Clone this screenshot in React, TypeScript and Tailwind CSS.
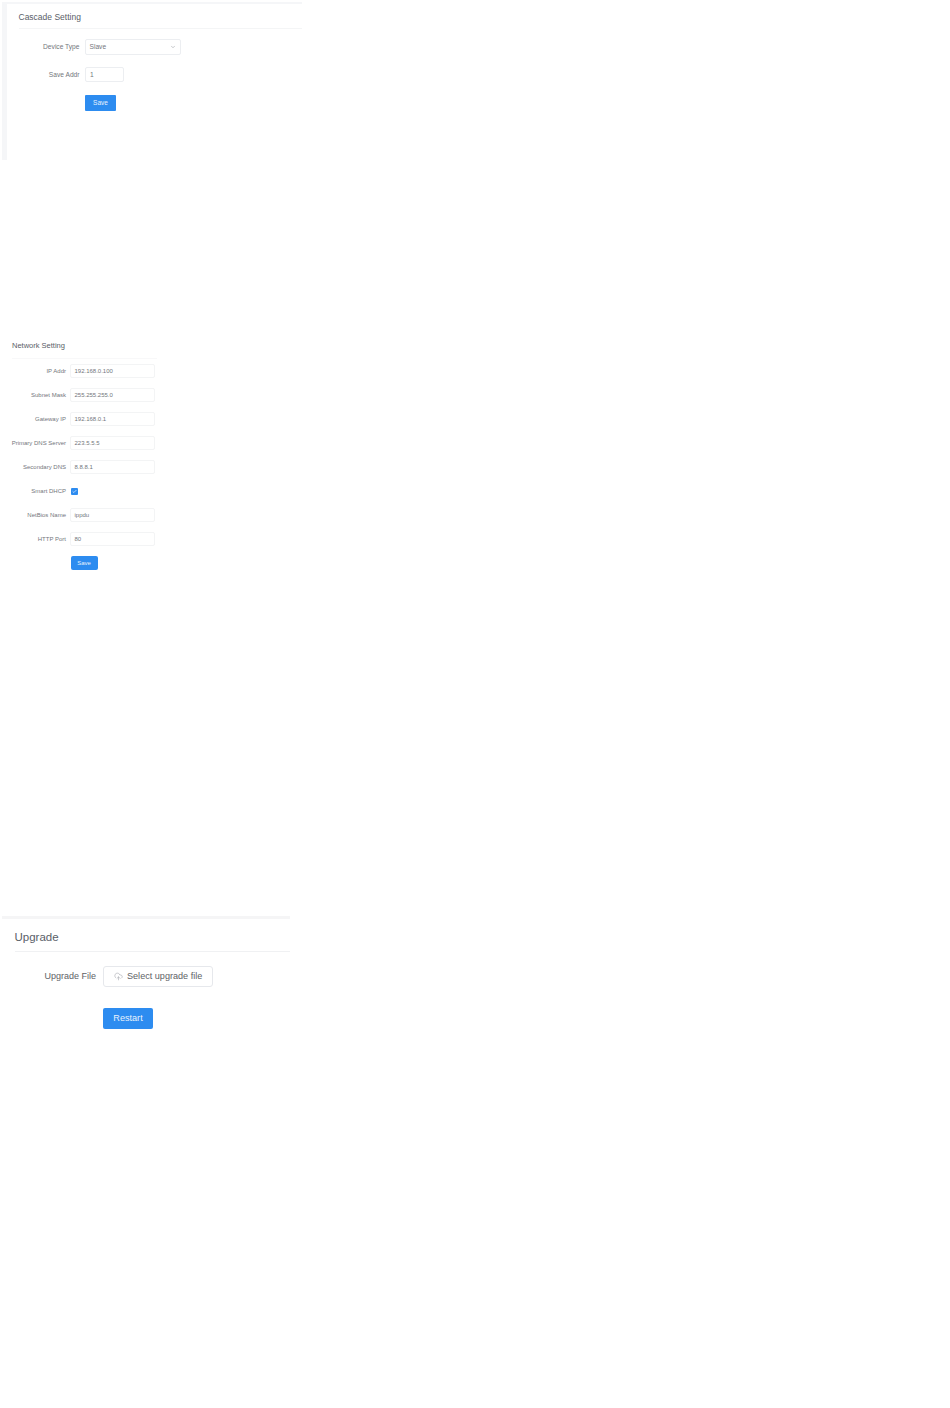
import { ChevronDown, UploadCloud, Check } from "lucide-react";

const netRows = [
  { label: "IP Addr", value: "192.168.0.100" },
  { label: "Subnet Mask", value: "255.255.255.0" },
  { label: "Gateway IP", value: "192.168.0.1" },
  { label: "Primary DNS Server", value: "223.5.5.5" },
  { label: "Secondary DNS", value: "8.8.8.1" },
  { label: "Smart DHCP", value: null },
  { label: "NetBios Name", value: "ippdu" },
  { label: "HTTP Port", value: "80" },
];

function NetRow({ label, value }: { label: string; value: string | null }) {
  return (
    <div className="flex items-center h-[14px] mb-[10px]">
      <div className="w-[66px] text-right text-[6px] text-[#73767c] whitespace-nowrap">{label}</div>
      <div className="ml-[4px]">
        {value === null ? (
          <div className="ml-[0.5px] w-[7px] h-[7px] rounded-[1px] bg-[#2d8cf0] flex items-center justify-center">
            <Check size={5} strokeWidth={3} className="text-white" />
          </div>
        ) : (
          <div className="w-[85px] h-[14px] border border-[#f3f4f5] rounded-[2px] pl-[3.5px] flex items-center text-[6px] text-[#73767c]">
            {value}
          </div>
        )}
      </div>
    </div>
  );
}

export default function App() {
  return (
    <div className="h-[1408px] bg-white font-['Liberation_Sans',Arial,sans-serif] overflow-hidden">
      {/* Cascade */}
      <div className="ml-[2px] mt-[2px] w-[300px] h-[158px] bg-[#f5f6f8] pl-[5px] pt-[2px]">
        <div className="h-full bg-white pl-[11.5px]">
          <div className="h-[25px] border-b border-[#f4f5f6] pt-[7px] text-[8.5px] leading-[12px] text-[#5a6068]">
            Cascade Setting
          </div>
          <div className="flex items-center mt-[10px] h-[16px]">
            <div className="w-[61px] text-right text-[6.65px] text-[#73767c]">Device Type</div>
            <div className="ml-[5.5px] w-[96px] h-[16px] border border-[#eceef1] rounded-[2px] flex items-center justify-between pl-[3.5px] pr-[4px] text-[6.65px] text-[#73767c]">
              Slave
              <ChevronDown size={6} className="text-[#909399]" />
            </div>
          </div>
          <div className="flex items-center mt-[12px] h-[15px]">
            <div className="w-[61px] text-right text-[6.65px] text-[#73767c]">Save Addr</div>
            <div className="ml-[5.5px] w-[39px] h-[15px] border border-[#eceef1] rounded-[2px] pl-[4px] flex items-center text-[6.65px] text-[#73767c]">
              1
            </div>
          </div>
          <div className="ml-[66.5px] mt-[12.5px] w-[31px] h-[16px] bg-[#2d8cf0] rounded-[1px] flex items-center justify-center text-[6.5px] font-light text-[#e8f2fd]">
            Save
          </div>
        </div>
      </div>

      {/* Network */}
      <div className="ml-[12px] mt-[180px] w-[145px]">
        <div className="h-[19px] border-b border-[#f8f8f9] text-[7.5px] leading-[12px] text-[#5a6068]">
          Network Setting
        </div>
      </div>
      <div className="mt-[5px]">
        {netRows.map((r) => (
          <NetRow key={r.label} label={r.label} value={r.value} />
        ))}
        <div className="ml-[70.5px] w-[27px] h-[14px] bg-[#2d8cf0] rounded-[2px] flex items-center justify-center text-[6px] text-[#e8f2fd]">
          Save
        </div>
      </div>

      {/* Upgrade */}
      <div className="ml-[2px] mt-[346px] w-[288px] border-t-[3px] border-[#f5f5f6] pl-[12.5px]">
        <div className="h-[33px] border-b border-[#f0f1f3] pt-[10px] text-[11.5px] leading-[16px] text-[#5a6068]">
          Upgrade
        </div>
        <div className="flex items-center mt-[14px] h-[21px]">
          <div className="w-[81.5px] text-right text-[9px] text-[#606266]">Upgrade File</div>
          <div className="ml-[7px] w-[110px] h-[21px] border border-[#e6e8ec] rounded-[3px] flex items-center pl-[10px] text-[9.1px] text-[#606266]">
            <UploadCloud size={9} strokeWidth={1.5} className="text-[#a0a3a9] mr-[4px]" />
            Select upgrade file
          </div>
        </div>
        <div className="ml-[88.5px] mt-[21px] w-[50px] h-[21px] bg-[#2d8cf0] rounded-[2px] flex items-center justify-center text-[9.1px] text-[#e8f2fd]">
          Restart
        </div>
      </div>
    </div>
  );
}
